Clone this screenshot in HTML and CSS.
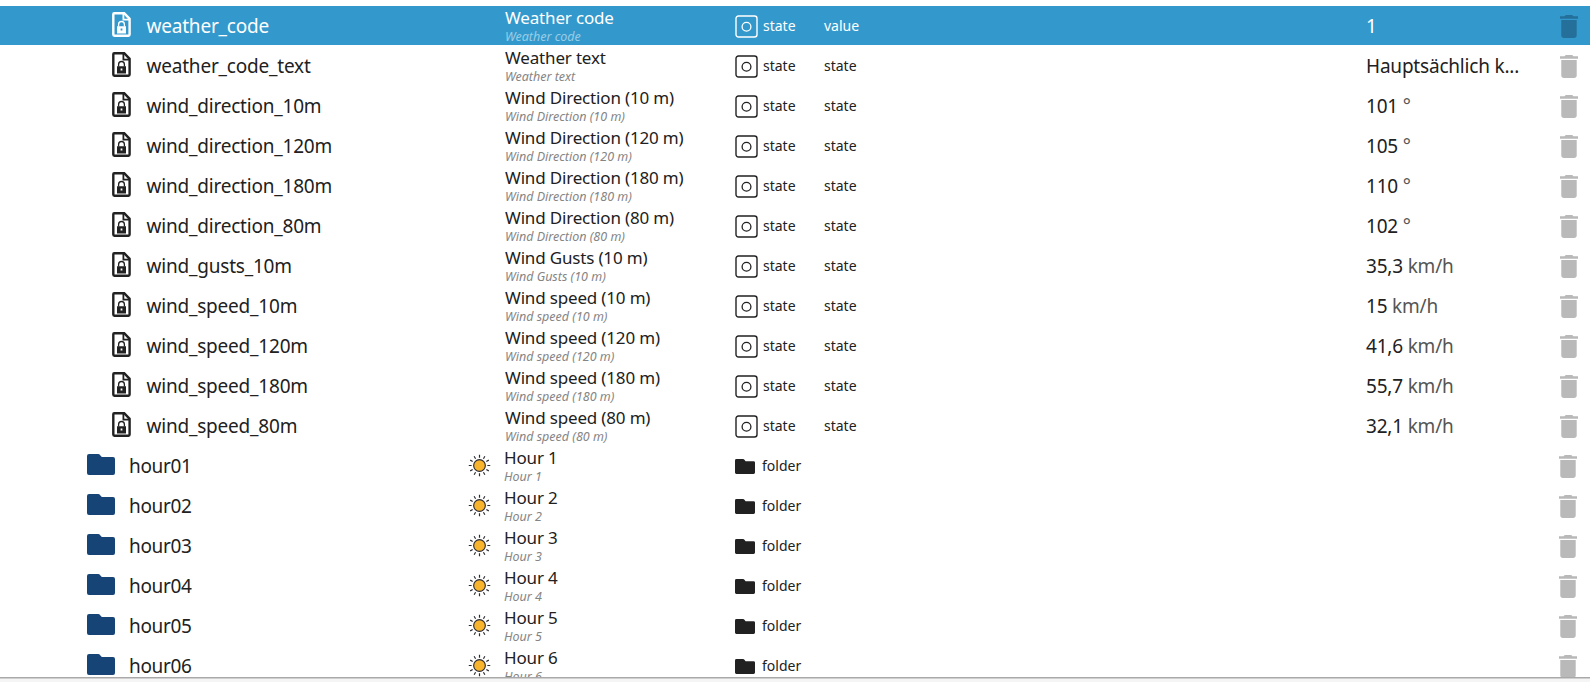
FILE: index.html
```
<!DOCTYPE html>
<html lang="de">
<head>
<meta charset="utf-8">
<title>Objects</title>
<link rel="stylesheet" href="styles.css">
</head>
<body>
<svg class="defs" aria-hidden="true">
  <symbol id="file" viewBox="0 0 19 25"><path d="M2.2 1.2H12.2L17.6 6.8V22.6Q17.6 23.7 16.5 23.7H2.4Q1.3 23.7 1.3 22.6V2.2Q1.3 1.2 2.2 1.2Z" fill="none" stroke="currentColor" stroke-width="2.4"/><path d="M11.4 1.5V7.6H17.5" fill="none" stroke="currentColor" stroke-width="1.8"/><path d="M6.6 14.6V12.4A2.9 2.9 0 0 1 12.4 12.4V14.6" fill="none" stroke="currentColor" stroke-width="1.3"/><path fill-rule="evenodd" d="M5 14.2H14V21.6H5ZM8.6 16.5V18.5H10.4V16.5Z" fill="currentColor"/></symbol>
  <symbol id="folder" viewBox="0 0 28 21"><path d="M2 0H11.2Q12.4 0 13.2 1.2L14.8 3.1H26Q28 3.1 28 5V19Q28 21 26 21H2Q0 21 0 19V2Q0 0 2 0Z" fill="currentColor"/></symbol>
  <symbol id="state" viewBox="0 0 23 23"><rect x="1" y="1" width="21" height="21" rx="2.5" fill="none" stroke="currentColor" stroke-width="1.4"/><circle cx="11.5" cy="11.7" r="4.4" fill="none" stroke="currentColor" stroke-width="1.3"/></symbol>
  <symbol id="trash" viewBox="5 3 14 18" preserveAspectRatio="none"><path d="M6 19c0 1.1.9 2 2 2h8c1.1 0 2-.9 2-2V7H6zM19 4h-3.5l-1-1h-5l-1 1H5v2h14z" fill="currentColor"/></symbol>
  <symbol id="sun" viewBox="-12 -12 24 24"><circle r="6.1" fill="#f9b42d" stroke="#2b2b33" stroke-width="1.2"/><path d="M0-8.2V-11.2M0 8.2V11.2M-8.2 0H-11.2M8.2 0H11.2M4.1-7.1L5.6-9.7M-4.1-7.1L-5.6-9.7M4.1 7.1L5.6 9.7M-4.1 7.1L-5.6 9.7M7.1-4.1L9.7-5.6M7.1 4.1L9.7 5.6M-7.1-4.1L-9.7-5.6M-7.1 4.1L-9.7 5.6" fill="none" stroke="#2b2b33" stroke-width="1.25"/></symbol>
</svg>
<main class="tree">
  <div class="row selected"><div class="id"><svg class="file"><use href="#file"/></svg>weather_code</div><div class="desc"><b>Weather code</b><i>Weather code</i></div><div class="type"><svg class="state"><use href="#state"/></svg>state</div><div class="role">value</div><div class="value">1</div><svg class="trash"><use href="#trash"/></svg></div>
  <div class="row"><div class="id"><svg class="file"><use href="#file"/></svg>weather_code_text</div><div class="desc"><b>Weather text</b><i>Weather text</i></div><div class="type"><svg class="state"><use href="#state"/></svg>state</div><div class="role">state</div><div class="value">Hauptsächlich k...</div><svg class="trash"><use href="#trash"/></svg></div>
  <div class="row"><div class="id"><svg class="file"><use href="#file"/></svg>wind_direction_10m</div><div class="desc"><b>Wind Direction (10 m)</b><i>Wind Direction (10 m)</i></div><div class="type"><svg class="state"><use href="#state"/></svg>state</div><div class="role">state</div><div class="value">101 <span>°</span></div><svg class="trash"><use href="#trash"/></svg></div>
  <div class="row"><div class="id"><svg class="file"><use href="#file"/></svg>wind_direction_120m</div><div class="desc"><b>Wind Direction (120 m)</b><i>Wind Direction (120 m)</i></div><div class="type"><svg class="state"><use href="#state"/></svg>state</div><div class="role">state</div><div class="value">105 <span>°</span></div><svg class="trash"><use href="#trash"/></svg></div>
  <div class="row"><div class="id"><svg class="file"><use href="#file"/></svg>wind_direction_180m</div><div class="desc"><b>Wind Direction (180 m)</b><i>Wind Direction (180 m)</i></div><div class="type"><svg class="state"><use href="#state"/></svg>state</div><div class="role">state</div><div class="value">110 <span>°</span></div><svg class="trash"><use href="#trash"/></svg></div>
  <div class="row"><div class="id"><svg class="file"><use href="#file"/></svg>wind_direction_80m</div><div class="desc"><b>Wind Direction (80 m)</b><i>Wind Direction (80 m)</i></div><div class="type"><svg class="state"><use href="#state"/></svg>state</div><div class="role">state</div><div class="value">102 <span>°</span></div><svg class="trash"><use href="#trash"/></svg></div>
  <div class="row"><div class="id"><svg class="file"><use href="#file"/></svg>wind_gusts_10m</div><div class="desc"><b>Wind Gusts (10 m)</b><i>Wind Gusts (10 m)</i></div><div class="type"><svg class="state"><use href="#state"/></svg>state</div><div class="role">state</div><div class="value">35,3 <span>km/h</span></div><svg class="trash"><use href="#trash"/></svg></div>
  <div class="row"><div class="id"><svg class="file"><use href="#file"/></svg>wind_speed_10m</div><div class="desc"><b>Wind speed (10 m)</b><i>Wind speed (10 m)</i></div><div class="type"><svg class="state"><use href="#state"/></svg>state</div><div class="role">state</div><div class="value">15 <span>km/h</span></div><svg class="trash"><use href="#trash"/></svg></div>
  <div class="row"><div class="id"><svg class="file"><use href="#file"/></svg>wind_speed_120m</div><div class="desc"><b>Wind speed (120 m)</b><i>Wind speed (120 m)</i></div><div class="type"><svg class="state"><use href="#state"/></svg>state</div><div class="role">state</div><div class="value">41,6 <span>km/h</span></div><svg class="trash"><use href="#trash"/></svg></div>
  <div class="row"><div class="id"><svg class="file"><use href="#file"/></svg>wind_speed_180m</div><div class="desc"><b>Wind speed (180 m)</b><i>Wind speed (180 m)</i></div><div class="type"><svg class="state"><use href="#state"/></svg>state</div><div class="role">state</div><div class="value">55,7 <span>km/h</span></div><svg class="trash"><use href="#trash"/></svg></div>
  <div class="row"><div class="id"><svg class="file"><use href="#file"/></svg>wind_speed_80m</div><div class="desc"><b>Wind speed (80 m)</b><i>Wind speed (80 m)</i></div><div class="type"><svg class="state"><use href="#state"/></svg>state</div><div class="role">state</div><div class="value">32,1 <span>km/h</span></div><svg class="trash"><use href="#trash"/></svg></div>
  <div class="row group"><div class="id"><svg class="folder"><use href="#folder"/></svg>hour01</div><svg class="sun"><use href="#sun"/></svg><div class="desc"><b>Hour 1</b><i>Hour 1</i></div><div class="type"><svg class="small-folder"><use href="#folder"/></svg>folder</div><svg class="trash"><use href="#trash"/></svg></div>
  <div class="row group"><div class="id"><svg class="folder"><use href="#folder"/></svg>hour02</div><svg class="sun"><use href="#sun"/></svg><div class="desc"><b>Hour 2</b><i>Hour 2</i></div><div class="type"><svg class="small-folder"><use href="#folder"/></svg>folder</div><svg class="trash"><use href="#trash"/></svg></div>
  <div class="row group"><div class="id"><svg class="folder"><use href="#folder"/></svg>hour03</div><svg class="sun"><use href="#sun"/></svg><div class="desc"><b>Hour 3</b><i>Hour 3</i></div><div class="type"><svg class="small-folder"><use href="#folder"/></svg>folder</div><svg class="trash"><use href="#trash"/></svg></div>
  <div class="row group"><div class="id"><svg class="folder"><use href="#folder"/></svg>hour04</div><svg class="sun"><use href="#sun"/></svg><div class="desc"><b>Hour 4</b><i>Hour 4</i></div><div class="type"><svg class="small-folder"><use href="#folder"/></svg>folder</div><svg class="trash"><use href="#trash"/></svg></div>
  <div class="row group"><div class="id"><svg class="folder"><use href="#folder"/></svg>hour05</div><svg class="sun"><use href="#sun"/></svg><div class="desc"><b>Hour 5</b><i>Hour 5</i></div><div class="type"><svg class="small-folder"><use href="#folder"/></svg>folder</div><svg class="trash"><use href="#trash"/></svg></div>
  <div class="row group"><div class="id"><svg class="folder"><use href="#folder"/></svg>hour06</div><svg class="sun"><use href="#sun"/></svg><div class="desc"><b>Hour 6</b><i>Hour 6</i></div><div class="type"><svg class="small-folder"><use href="#folder"/></svg>folder</div><svg class="trash"><use href="#trash"/></svg></div>
</main>
<footer class="edge"></footer>
</body>
</html>
```
FILE: styles.css
```
* { box-sizing: border-box; }
body {
  margin: 0;
  height: 682px;
  overflow: hidden;
  background: #fff;
  color: #212121;
  font-family: "Segoe UI", "Noto Sans", sans-serif;
}
.defs { display: none; }
.tree {
  height: 677px;
  padding-top: 6px;
  overflow: hidden;
}
.row {
  display: grid;
  grid-template-columns: 468px 37px 230px 89px 542px 194px 1fr;
  height: 39px;
  margin-bottom: 1px;
}
.selected { background: #3399cc; color: #fff; }
.id {
  grid-column: 1;
  display: flex;
  padding-left: 112px;
  font-size: 19px;
  letter-spacing: -0.2px;
  line-height: 41px;
}
.file { width: 19px; height: 25px; margin: 6px 15.5px 0 0; }
.group .id { padding-left: 87px; letter-spacing: -0.35px; }
.folder { width: 28px; height: 21px; margin: 8px 14px 0 0; color: #164477; }
.sun { grid-column: 2; width: 23px; height: 23px; margin-top: 8px; }
.desc { grid-column: 3; white-space: nowrap; }
.group .desc { margin-left: -1px; }
.desc b {
  display: block;
  height: 22px;
  font-size: 17px;
  font-weight: 400;
  letter-spacing: -0.17px;
  line-height: 23px;
}
.desc i {
  display: block;
  font-size: 12.5px;
  line-height: 17px;
  color: #858585;
}
.selected .desc i { color: #99cce6; }
.type {
  grid-column: 4;
  display: flex;
  font-size: 14px;
  line-height: 39px;
}
.state { width: 23px; height: 23px; margin: 9px 5px 0 0; }
.small-folder { width: 20px; height: 15px; margin: 13px 7px 0 0; }
.role { grid-column: 5; font-size: 14px; line-height: 39px; }
.value { grid-column: 6; font-size: 19px; letter-spacing: -0.2px; line-height: 41px; white-space: nowrap; }
.value span { color: #555; }
.trash { grid-column: 7; width: 18px; height: 23px; margin-top: 9px; color: #b9b9b9; }
.group .trash { margin-left: -1px; }
.selected .trash { color: #24709a; }
.edge { height: 5px; border-top: 1px solid #a8a8a8; background: linear-gradient(#d0d0d0 1px, #f5f5f5 1px); }
```
